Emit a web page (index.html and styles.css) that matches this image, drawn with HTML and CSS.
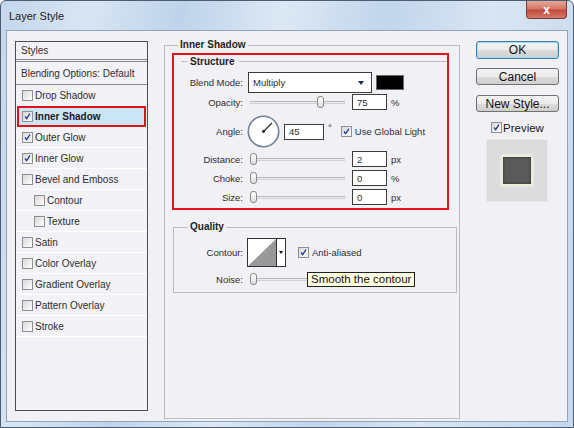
FILE: index.html
```html
<!DOCTYPE html>
<html>
<head>
<meta charset="utf-8">
<title>Layer Style</title>
<link rel="stylesheet" href="styles.css">
</head>
<body>
<div class="window">
  <div class="titlebar">
    <span class="title">Layer Style</span>
    <div class="close">x</div>
  </div>
  <div class="client">
    <div class="stylelist">
      <div class="li head">Styles</div>
      <div class="li blend">Blending Options: Default</div>
      <div class="li"><span class="cb"></span>Drop Shadow</div>
      <div class="li active"><span class="cb"><svg viewBox="0 0 11 11"><path d="M2.5 5.5 L4.5 8 L8.5 2" /></svg></span>Inner Shadow</div>
      <div class="li"><span class="cb"><svg viewBox="0 0 11 11"><path d="M2.5 5.5 L4.5 8 L8.5 2" /></svg></span>Outer Glow</div>
      <div class="li"><span class="cb"><svg viewBox="0 0 11 11"><path d="M2.5 5.5 L4.5 8 L8.5 2" /></svg></span>Inner Glow</div>
      <div class="li"><span class="cb"></span>Bevel and Emboss</div>
      <div class="li sub"><span class="cb"></span>Contour</div>
      <div class="li sub"><span class="cb"></span>Texture</div>
      <div class="li"><span class="cb"></span>Satin</div>
      <div class="li"><span class="cb"></span>Color Overlay</div>
      <div class="li"><span class="cb"></span>Gradient Overlay</div>
      <div class="li"><span class="cb"></span>Pattern Overlay</div>
      <div class="li"><span class="cb"></span>Stroke</div>
    </div>

    <fieldset class="group main">
      <legend>Inner Shadow</legend>
      <div class="structure">
        <div class="sect-head">Structure</div>
        <div class="row r-blend">
          <span class="lbl">Blend Mode:</span>
          <div class="select">Multiply<span class="arrow"></span></div>
          <span class="swatch"></span>
        </div>
        <div class="row r-field r-first">
          <span class="lbl">Opacity:</span>
          <div class="slider"><span class="thumb" style="left:67px"></span></div>
          <span class="field">75</span>
          <span class="unit">%</span>
        </div>
        <div class="row r-angle">
          <span class="lbl">Angle:</span>
          <svg class="dial" viewBox="0 0 33 33">
            <circle cx="16.5" cy="16.5" r="15.2" fill="#fff" stroke="#6f7f9c" stroke-width="1.6"/>
            <line x1="16.5" y1="16.5" x2="25" y2="8" stroke="#222" stroke-width="1.1"/>
            <circle cx="16.5" cy="16.5" r="1.4" fill="#111"/>
          </svg>
          <span class="field wide">45</span>
          <span class="deg">°</span>
          <span class="cb gl"><svg viewBox="0 0 11 11"><path d="M2.5 5.5 L4.5 8 L8.5 2" /></svg></span>
          <span class="txt">Use Global Light</span>
        </div>
        <div class="row r-field">
          <span class="lbl">Distance:</span>
          <div class="slider"><span class="thumb" style="left:0px"></span></div>
          <span class="field">2</span>
          <span class="unit">px</span>
        </div>
        <div class="row r-field">
          <span class="lbl">Choke:</span>
          <div class="slider"><span class="thumb" style="left:0px"></span></div>
          <span class="field">0</span>
          <span class="unit">%</span>
        </div>
        <div class="row r-field">
          <span class="lbl">Size:</span>
          <div class="slider"><span class="thumb" style="left:0px"></span></div>
          <span class="field">0</span>
          <span class="unit">px</span>
        </div>
      </div>

      <fieldset class="group quality">
        <legend>Quality</legend>
        <div class="row r-contour">
          <span class="lbl q">Contour:</span>
          <div class="contour">
            <svg class="cprev" viewBox="0 0 28 27"><rect width="28" height="27" fill="#fff"/><polygon points="0,27 28,0 28,27" fill="#999"/></svg>
            <span class="cdrop"><span class="arrow small"></span></span>
          </div>
          <span class="cb aa"><svg viewBox="0 0 11 11"><path d="M2.5 5.5 L4.5 8 L8.5 2" /></svg></span>
          <span class="txt">Anti-aliased</span>
        </div>
        <div class="row r-noise">
          <span class="lbl q">Noise:</span>
          <div class="slider"><span class="thumb" style="left:0px"></span></div>
          <span class="tooltip">Smooth the contour</span>
        </div>
      </fieldset>
    </fieldset>

    <div class="side">
      <div class="btn default">OK</div>
      <div class="btn cancel">Cancel</div>
      <div class="btn newstyle">New Style...</div>
      <div class="preview-row"><span class="cb"><svg viewBox="0 0 11 11"><path d="M2.5 5.5 L4.5 8 L8.5 2" /></svg></span>Preview</div>
      <div class="preview"><div class="swatch-prev"></div></div>
    </div>
  </div>
</div>
</body>
</html>
```

FILE: styles.css
```css
* { box-sizing: border-box; }
html, body { margin: 0; padding: 0; }
body {
  width: 574px;
  height: 428px;
  overflow: hidden;
  background: #ffffff;
  font-family: "Liberation Sans", Arial, sans-serif;
  color: #262626;
}

.window {
  width: 574px;
  height: 428px;
  border: 1px solid #4c5d72;
  border-radius: 6px 6px 0 0;
  background: linear-gradient(100deg, #c3d6ec 0%, #d8e5f3 14%, #bed3ea 28%, #dde8f5 44%, #c1d5eb 60%, #d9e5f3 76%, #c4d7ec 100%);
  display: flex;
  flex-direction: column;
}

.titlebar {
  height: 29px;
  flex: none;
  display: flex;
  align-items: center;
  padding-left: 8px;
}
.title { font-size: 11px; color: #1b1b1b; }
.close {
  margin-left: auto;
  margin-right: 6px;
  align-self: flex-start;
  width: 41px;
  height: 18px;
  border: 1px solid #7a3a36;
  border-top: none;
  border-radius: 0 0 4px 4px;
  background: linear-gradient(#e3a89b 0%, #d47565 48%, #c0483b 52%, #d37a6a 100%);
  color: #ffffff;
  font-weight: bold;
  font-size: 12px;
  display: flex;
  align-items: center;
  justify-content: center;
}

.client {
  flex: 1;
  margin: 0 5px 5px;
  border: 1px solid #8fa3bb;
  background: #f1f0f5;
  display: flex;
  align-items: flex-start;
  padding: 10px 0 0 8px;
}

/* left list */
.stylelist {
  flex: none;
  width: 133px;
  height: 370px;
  border: 1px solid #4d4d4d;
  background: #f3f2f6;
  font-size: 10px;
  color: #2e2e2e;
}
.li {
  height: 21px;
  display: flex;
  align-items: center;
  padding-left: 6px;
  border-bottom: 1px solid #ffffff;
}
.li.head { height: 20px; padding-left: 5px; border-bottom: 3px double #8a8a8a; }
.li.blend { height: 23px; padding-left: 5px; border-bottom: 1px solid #8a8a8a; }
.li.sub { padding-left: 18px; }
.li.active {
  margin: 0 1px;
  padding-left: 3px;
  border: 2px solid #e3101b;
  background: #cbe6f7;
  font-weight: bold;
  color: #1a1a1a;
}

.cb {
  flex: none;
  width: 11px;
  height: 11px;
  margin-right: 2px;
  border: 1px solid #8e8f8f;
  background: linear-gradient(135deg, #d8d8d8, #ffffff);
  display: inline-flex;
}
.cb svg { width: 9px; height: 9px; }
.cb path { fill: none; stroke: #1f3a93; stroke-width: 1.6; }

/* group boxes */
.group {
  margin: 0;
  padding: 0;
  min-width: 0;
  border: 1px solid #bdbdbd;
}
.group > legend {
  font-weight: bold;
  font-size: 10px;
  line-height: 12px;
  padding: 0 2px;
  color: #1f1f1f;
}
.main {
  flex: none;
  width: 296px;
  height: 380px;
  margin: -2px 0 0 16px;
  padding: 2px 10px 0 7px;
}
.main > legend { margin-left: 6px; }

.structure {
  border: 2px solid #e3141d;
  padding: 0 0 3px 0;
}
.sect-head {
  height: 12px;
  display: flex;
  align-items: center;
  padding-left: 7px;
  font-weight: bold;
  font-size: 10px;
  color: #1f1f1f;
}
.sect-head::before {
  content: "";
  width: 6px;
  border-top: 1px solid #bdbdbd;
  margin-right: 3px;
}
.sect-head::after {
  content: "";
  flex: 1;
  border-top: 1px solid #bdbdbd;
  margin-left: 5px;
}

.row {
  display: flex;
  align-items: center;
  font-size: 9.5px;
  color: #2e2e2e;
}
.lbl {
  flex: none;
  width: 69px;
  text-align: right;
}
.lbl.q { width: 62px; }

.r-blend { margin-top: 5px; height: 21px; }
.select {
  flex: none;
  width: 124px;
  height: 21px;
  margin-left: 5px;
  border: 1px solid #3c3c3c;
  background: #ffffff;
  display: flex;
  align-items: center;
  padding-left: 4px;
}
.arrow {
  margin-left: auto;
  margin-right: 7px;
  width: 0;
  height: 0;
  border-left: 3.5px solid transparent;
  border-right: 3.5px solid transparent;
  border-top: 4px solid #1d2a55;
}
.arrow.small {
  margin: 0;
  border-left-width: 2.5px;
  border-right-width: 2.5px;
  border-top: 3px solid #111;
}
.swatch {
  flex: none;
  width: 28px;
  height: 15px;
  margin-left: 4px;
  background: #000000;
  border: 1px solid #6a6a6a;
}

.r-field { margin-top: 3px; height: 16px; }
.r-field.r-first { margin-top: 1px; }
.slider {
  flex: none;
  position: relative;
  width: 95px;
  height: 12px;
  margin-left: 7px;
  background: linear-gradient(transparent 5px, #b9b9b9 5px, #b9b9b9 6px, #ececec 6px, #ececec 7px, #d0d0d0 7px, #d0d0d0 8px, transparent 8px);
}
.thumb {
  position: absolute;
  top: 0;
  width: 7px;
  height: 12px;
  border: 1px solid #8a8a8a;
  border-radius: 3px;
  background: linear-gradient(#ffffff, #dcdcdc);
}
.field {
  flex: none;
  width: 35px;
  height: 16px;
  margin-left: 7px;
  border: 1px solid #3c3c3c;
  background: #ffffff;
  padding-left: 4px;
  display: flex;
  align-items: center;
}
.field.wide { width: 40px; margin-left: 4px; }
.unit { margin-left: 4px; }

.r-angle { margin-top: 5px; height: 33px; }
.dial { flex: none; width: 33px; height: 33px; margin-left: 4px; }
.deg { margin-left: 4px; align-self: flex-start; margin-top: 7px; }
.cb.gl { margin-left: 9px; margin-right: 3px; }

/* quality */
.quality {
  width: 284px;
  margin: 11px 0 0 1px;
  padding: 5px 0 7px 7px;
}
.quality > legend { margin-left: 7px; }
.r-contour { height: 29px; }
.contour {
  flex: none;
  display: flex;
  width: 39px;
  height: 29px;
  margin-left: 4px;
  border: 1px solid #333333;
  background: #ffffff;
}
.cprev { width: 28px; height: 27px; display: block; }
.cdrop {
  width: 9px;
  border-left: 1px solid #333333;
  display: flex;
  align-items: center;
  justify-content: center;
}
.cb.aa { margin-left: 12px; margin-right: 3px; }

.r-noise { position: relative; margin-top: 6px; height: 12px; }
.tooltip {
  position: absolute;
  left: 126px;
  top: -1px;
  height: 15px;
  padding: 0 3px;
  border: 1px solid #222222;
  background: #ffffe1;
  font-size: 11.5px;
  line-height: 13px;
  white-space: nowrap;
  color: #111111;
}

/* side */
.side {
  flex: none;
  width: 83px;
  margin-left: 16px;
  display: flex;
  flex-direction: column;
}
.btn {
  height: 18px;
  border: 1px solid #707070;
  border-radius: 3px;
  background: linear-gradient(#f4f4f4 0%, #ebebeb 50%, #dcdcdc 51%, #cfcfcf 100%);
  font-size: 12px;
  display: flex;
  align-items: center;
  justify-content: center;
  color: #111111;
}
.btn.default {
  border-color: #3c7fb1;
  box-shadow: inset 0 0 0 1px #9fdcf5;
}
.btn.cancel { margin-top: 9px; height: 17px; }
.btn.newstyle { margin-top: 10px; height: 17px; }
.preview-row {
  margin-top: 10px;
  height: 11px;
  padding-left: 15px;
  display: flex;
  align-items: center;
  font-size: 11.5px;
  color: #1a1a1a;
}
.preview-row .cb { margin-right: 1px; }
.preview {
  margin: 6px 0 0 10px;
  width: 62px;
  height: 63px;
  background: #dcdcdc;
  border: 1px solid #e8e8e8;
  display: flex;
  align-items: center;
  justify-content: center;
}
.swatch-prev {
  width: 32px;
  height: 31px;
  background: #5a5a5a;
  border: 2px solid #ecedd9;
  box-shadow: 0 0 2px #f6f6ea, inset 0 0 3px #2a2a2a;
}
```
